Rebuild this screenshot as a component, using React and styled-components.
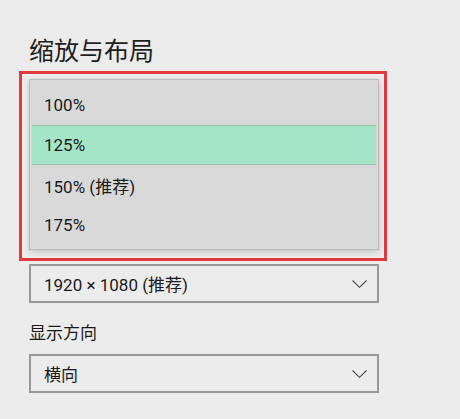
import React from "react";
import styled, { createGlobalStyle } from "styled-components";

const Global = createGlobalStyle`
  html, body { margin: 0; padding: 0; background: #ececec; }
  body {
    font-family: Roboto, "Noto Sans CJK SC", sans-serif;
    color: #1a1a1a;
    -webkit-font-smoothing: antialiased;
  }
`;

const Page = styled.div`
  width: 460px;
  height: 419px;
  box-sizing: border-box;
  padding: 36px 0 0 29px;
  display: flex;
  flex-direction: column;
  overflow: hidden;
`;

const Title = styled.h2`
  margin: 0;
  font-size: 25px;
  font-weight: 400;
  line-height: 32px;
  color: #1f1f1f;
`;

const Highlight = styled.div`
  margin: 3px 0 0 -10px;
  width: 368px;
  box-sizing: border-box;
  border: 3px solid #e03a3e;
  padding: 5px 5px 8px 7px;
`;

const Menu = styled.ul`
  list-style: none;
  margin: 0;
  padding: 5px 2px 4px;
  width: 350px;
  box-sizing: border-box;
  background: #d9d9d9;
  border: 1px solid #bcbcbc;
  box-shadow: 0 2px 6px rgba(0, 0, 0, 0.18);
`;

const Item = styled.li`
  height: 40px;
  display: flex;
  align-items: center;
  padding-left: 12px;
  font-size: 17px;
  background: ${(p) => (p.$selected ? "#a3e5c6" : "transparent")};
  box-shadow: ${(p) =>
    p.$selected ? "inset 0 1px 0 #9bbfae, inset 0 -1px 0 #9bbfae" : "none"};
`;

const Select = styled.div`
  width: 350px;
  height: 39px;
  box-sizing: border-box;
  border: 2px solid #989898;
  display: flex;
  align-items: center;
  justify-content: space-between;
  padding: 0 10px 0 13px;
  font-size: 17px;
  margin-top: ${(p) => p.$mt || 0}px;
`;

const Label = styled.div`
  font-size: 17px;
  line-height: 24px;
  margin: 18px 0 9px;
`;

const Chevron = () => (
  <svg width="15" height="8" viewBox="0 0 15 8" fill="none">
    <polyline points="0.5,0.5 7.5,7.3 14.5,0.5" stroke="#4a4a4a" strokeWidth="1.1" />
  </svg>
);

const items = ["100%", "125%", "150% (推荐)", "175%"];

export default function App() {
  return (
    <>
      <Global />
      <Page>
        <Title>缩放与布局</Title>
        <Highlight>
          <Menu>
            {items.map((t, i) => (
              <Item key={t} $selected={i === 1}>
                {t}
              </Item>
            ))}
          </Menu>
        </Highlight>
        <Select $mt={3}>
          <span>1920 × 1080 (推荐)</span>
          <Chevron />
        </Select>
        <Label>显示方向</Label>
        <Select>
          <span>横向</span>
          <Chevron />
        </Select>
      </Page>
    </>
  );
}
